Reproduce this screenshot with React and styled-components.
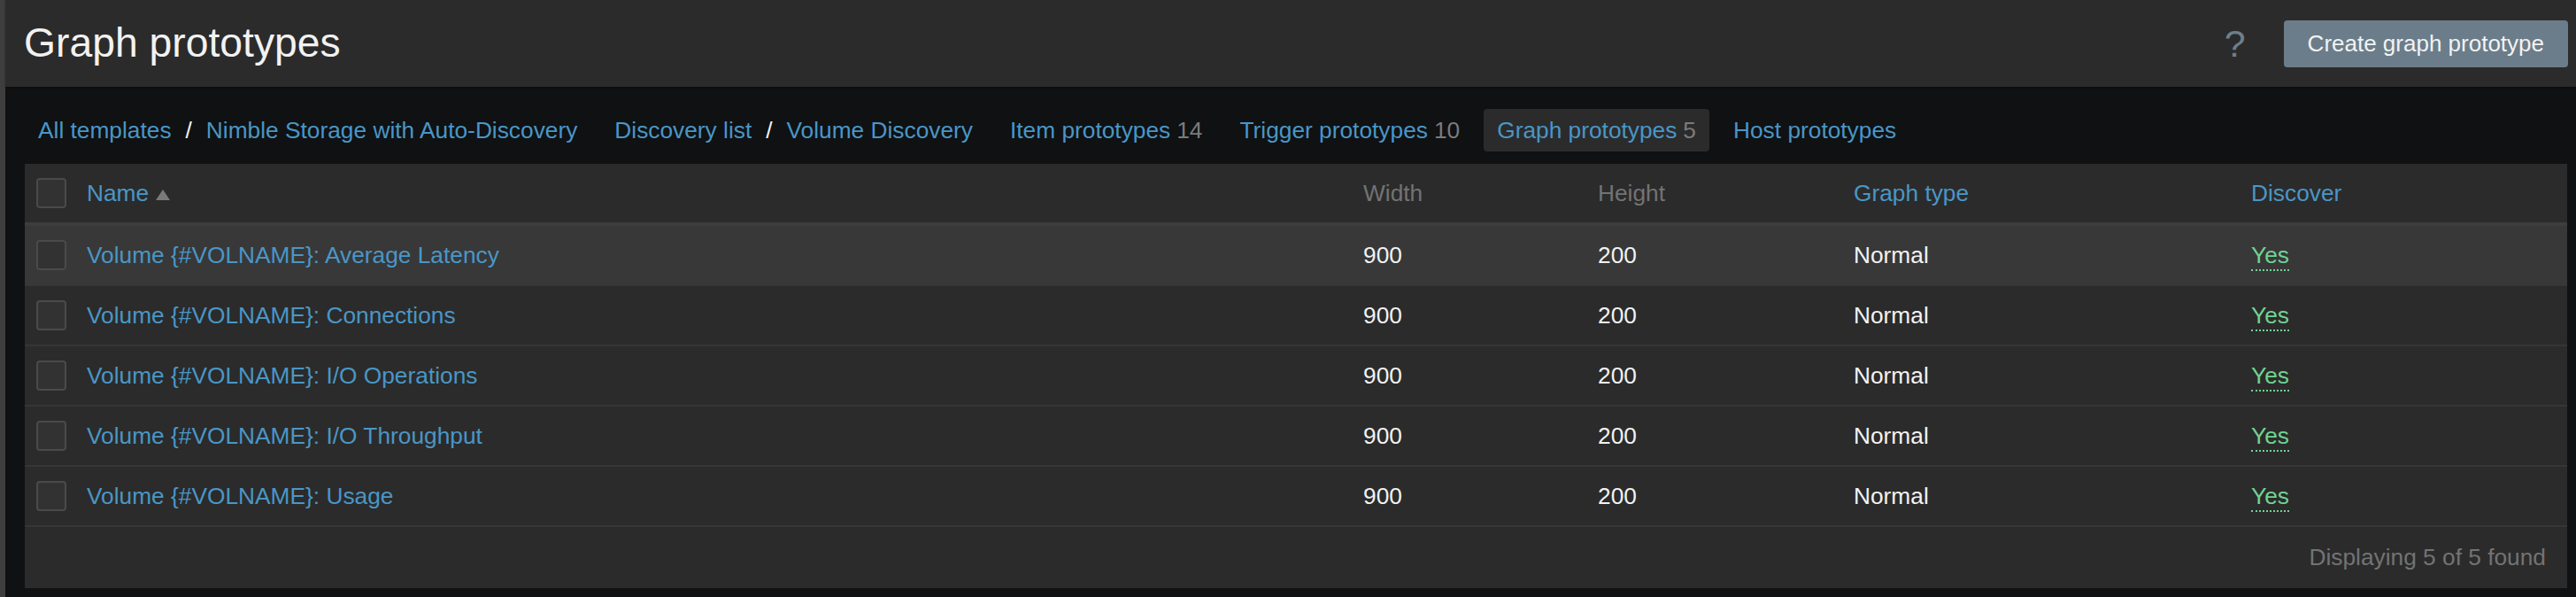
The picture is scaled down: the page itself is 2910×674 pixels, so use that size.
import React from 'react';
import styled, { createGlobalStyle } from 'styled-components';

const GlobalStyle = createGlobalStyle`
  html, body {
    margin: 0;
    padding: 0;
    background: #0f1113;
  }
  body {
    font-family: "Liberation Sans", Arial, sans-serif;
    font-size: 26.3px;
    color: #f2f2f2;
  }
`;

const crumbs = ['All templates', 'Nimble Storage with Auto-Discovery'];
const discovery = ['Discovery list', 'Volume Discovery'];

const tabs = [
  { id: 'items', title: 'Item prototypes', count: 14 },
  { id: 'triggers', title: 'Trigger prototypes', count: 10 },
  { id: 'graphs', title: 'Graph prototypes', count: 5, active: true },
  { id: 'hosts', title: 'Host prototypes' }
];

const graphs = [
  { id: 1, name: 'Volume {#VOLNAME}: Average Latency', hovered: true },
  { id: 2, name: 'Volume {#VOLNAME}: Connections' },
  { id: 3, name: 'Volume {#VOLNAME}: I/O Operations' },
  { id: 4, name: 'Volume {#VOLNAME}: I/O Throughput' },
  { id: 5, name: 'Volume {#VOLNAME}: Usage' }
];

const App = () => {
  return (
    <Page>
      <GlobalStyle />
      <SideEdge />
      <Main>
        <Header>
          <Title>Graph prototypes</Title>
          <HeaderActions>
            <Help>?</Help>
            <CreateButton>Create graph prototype</CreateButton>
          </HeaderActions>
        </Header>

        <Content>
          <Nav>
            <NavItem>
              {crumbs.map((c, i) => (
                <React.Fragment key={c}>
                  {i > 0 && <Sep>/</Sep>}
                  <Link>{c}</Link>
                </React.Fragment>
              ))}
            </NavItem>
            <NavItem>
              {discovery.map((c, i) => (
                <React.Fragment key={c}>
                  {i > 0 && <Sep>/</Sep>}
                  <Link>{c}</Link>
                </React.Fragment>
              ))}
            </NavItem>
            {tabs.map((t) => (
              <NavItem key={t.id} $active={t.active}>
                <Link>{t.title}</Link>
                {t.count !== undefined && <Count>{t.count}</Count>}
              </NavItem>
            ))}
          </Nav>

          <Panel>
            <Table>
              <colgroup>
                <col style={{ width: 60 }} />
                <col style={{ width: 1442 }} />
                <col style={{ width: 265 }} />
                <col style={{ width: 289 }} />
                <col style={{ width: 449 }} />
                <col style={{ width: 367 }} />
              </colgroup>
              <thead>
                <tr>
                  <CheckCell as="th">
                    <Checkbox />
                  </CheckCell>
                  <Th>
                    <Link>Name</Link>
                    <SortArrow />
                  </Th>
                  <Th $muted>Width</Th>
                  <Th $muted>Height</Th>
                  <Th><Link>Graph type</Link></Th>
                  <Th><Link>Discover</Link></Th>
                </tr>
              </thead>
              <tbody>
                {graphs.map((g) => (
                  <Row key={g.id} $hovered={g.hovered}>
                    <CheckCell>
                      <Checkbox />
                    </CheckCell>
                    <Td><Link>{g.name}</Link></Td>
                    <Td>900</Td>
                    <Td>200</Td>
                    <Td>Normal</Td>
                    <Td><Yes>Yes</Yes></Td>
                  </Row>
                ))}
              </tbody>
            </Table>
            <Footer>Displaying 5 of 5 found</Footer>
          </Panel>
        </Content>
      </Main>
    </Page>
  );
};

const Page = styled.div`
  display: flex;
  min-height: 674px;
`;

const SideEdge = styled.div`
  width: 6px;
  flex-shrink: 0;
  background: #3e3e3e;
`;

const Main = styled.div`
  flex: 1;
  display: flex;
  flex-direction: column;
  min-width: 0;
`;

const Header = styled.header`
  height: 98px;
  background: #2b2b2b;
  display: flex;
  align-items: center;
  justify-content: space-between;
  padding: 0 9px 0 21px;
  box-shadow: 0 1px 2px rgba(0, 0, 0, 0.35);
`;

const Title = styled.h1`
  margin: 0;
  font-size: 46.3px;
  font-weight: 400;
  color: #f2f2f2;
  line-height: 1;
  padding-bottom: 2px;
`;

const HeaderActions = styled.div`
  display: flex;
  align-items: center;
  gap: 43px;
`;

const Help = styled.span`
  font-size: 43px;
  line-height: 1;
  color: #6f7f8c;
`;

const CreateButton = styled.button`
  height: 53px;
  padding: 0 27px;
  border: none;
  border-radius: 4px;
  background: #6b7d8a;
  color: #f2f2f2;
  font-family: "Liberation Sans", Arial, sans-serif;
  font-size: 26px;
  cursor: pointer;
`;

const Content = styled.div`
  padding: 0 10px 5px 22px;
`;

const Nav = styled.nav`
  display: flex;
  align-items: center;
  gap: 12px;
  padding: 25px 0 14px;
`;

const NavItem = styled.div`
  display: flex;
  align-items: center;
  height: 48px;
  padding: 0 15px;
  border-radius: 4px;
  background: ${(p) => (p.$active ? '#2b2b2b' : 'transparent')};
  white-space: nowrap;
`;

const Link = styled.span`
  color: #4a96c6;
  cursor: pointer;
`;

const Sep = styled.span`
  color: #f2f2f2;
  margin: 0 16px;
`;

const Count = styled.span`
  color: #7b7b7b;
  margin-left: 7px;
`;

const Panel = styled.div`
  background: #2b2b2b;
`;

const Table = styled.table`
  width: 100%;
  table-layout: fixed;
  border-collapse: collapse;
`;

const Th = styled.th`
  height: 66px;
  padding: 0 10px;
  text-align: left;
  font-weight: 400;
  color: ${(p) => (p.$muted ? '#737373' : '#f2f2f2')};
  border-bottom: 4px solid #3d3d3d;
  white-space: nowrap;
`;

const Row = styled.tr`
  background: ${(p) => (p.$hovered ? '#383838' : 'transparent')};
`;

const Td = styled.td`
  height: 66px;
  padding: 0 10px;
  color: #f2f2f2;
  border-bottom: 2px solid #363636;
  white-space: nowrap;
`;

const CheckCell = styled.td`
  padding: 0 0 0 13px;
  border-bottom: ${(p) => (p.as === 'th' ? '4px solid #3d3d3d' : '2px solid #363636')};
  height: 66px;
`;

const Checkbox = styled.div`
  width: 34px;
  height: 34px;
  box-sizing: border-box;
  border: 2px solid #4a4a4a;
  border-radius: 4px;
  background: #323232;
`;

const SortArrow = styled.span`
  display: inline-block;
  width: 0;
  height: 0;
  margin-left: 8px;
  border-left: 8px solid transparent;
  border-right: 8px solid transparent;
  border-bottom: 12px solid #7a7a7a;
  vertical-align: 1px;
`;

const Yes = styled.span`
  color: #6fd393;
  border-bottom: 2px dotted #6fd393;
  padding-bottom: 1px;
`;

const Footer = styled.div`
  height: 69px;
  display: flex;
  align-items: center;
  justify-content: flex-end;
  padding-right: 24px;
  color: #737373;
`;

export default App;
